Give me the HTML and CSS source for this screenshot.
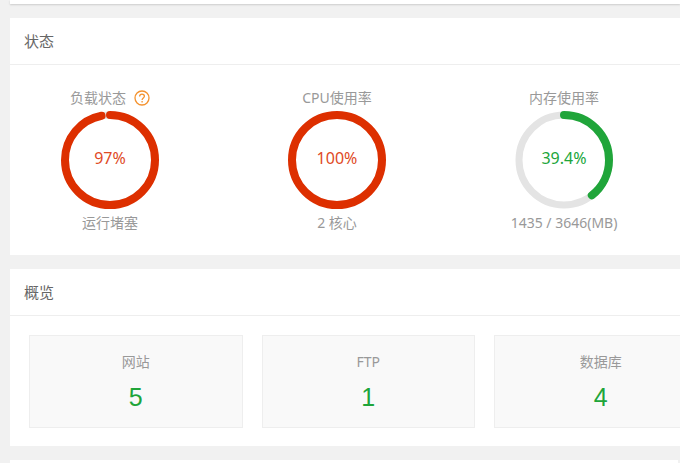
FILE: index.html
```html
<!DOCTYPE html>
<html lang="zh-CN">
<head>
  <meta charset="UTF-8" />
  <meta name="viewport" content="width=device-width, initial-scale=1.0"/>
  <title>状态</title>
  <link rel="stylesheet" href="styles.css">
</head>
<body>
  <main class="main">
    <div class="panel panel-top"></div>

    <section class="panel">
      <h2 class="panel-title">状态</h2>
      <div class="status-list">
        <div class="status-item danger">
          <h3 class="status-name">负载状态
            <a class="help" href="#" aria-label="?">
              <svg viewBox="0 0 16 16" width="16" height="16">
                <circle cx="8" cy="8" r="7"/>
                <path d="M5.6 6.5c0-1.5 1-2.4 2.4-2.4s2.4.9 2.4 2.2c0 1.6-2.3 1.8-2.3 3.7M8.1 11v1.4"/>
              </svg>
            </a>
          </h3>
          <div class="gauge">
            <svg viewBox="0 0 98 98">
              <circle class="track" cx="49" cy="49" r="45"/>
              <circle class="bar" cx="49" cy="49" r="45" pathLength="100" stroke-dasharray="97 100"/>
            </svg>
            <span class="percent">97%</span>
          </div>
          <p class="status-info">运行堵塞</p>
        </div>
        <div class="status-item danger">
          <h3 class="status-name">CPU使用率</h3>
          <div class="gauge">
            <svg viewBox="0 0 98 98">
              <circle class="track" cx="49" cy="49" r="45"/>
              <circle class="bar" cx="49" cy="49" r="45"/>
            </svg>
            <span class="percent">100%</span>
          </div>
          <p class="status-info">2 核心</p>
        </div>
        <div class="status-item normal">
          <h3 class="status-name">内存使用率</h3>
          <div class="gauge">
            <svg viewBox="0 0 98 98">
              <circle class="track" cx="49" cy="49" r="45"/>
              <circle class="bar" cx="49" cy="49" r="45" pathLength="100" stroke-dasharray="39.4 100"/>
            </svg>
            <span class="percent">39.4%</span>
          </div>
          <p class="status-info">1435 / 3646(MB)</p>
        </div>
      </div>
    </section>

    <section class="panel">
      <h2 class="panel-title">概览</h2>
      <div class="overview-list">
        <div class="overview-item">
          <p class="overview-name">网站</p>
          <a class="overview-count" href="#">5</a>
        </div>
        <div class="overview-item">
          <p class="overview-name">FTP</p>
          <a class="overview-count" href="#">1</a>
        </div>
        <div class="overview-item">
          <p class="overview-name">数据库</p>
          <a class="overview-count" href="#">4</a>
        </div>
      </div>
    </section>

    <div class="panel panel-next"></div>
  </main>
</body>
</html>
```

FILE: styles.css
```css
* {
  box-sizing: border-box;
}

body {
  margin: 0;
  background: #f1f1f1;
  color: #999;
  font-family: 'Noto Sans', 'Noto Sans CJK SC', sans-serif;
  font-size: 14px;
  line-height: 20px;
}

h2, h3, p {
  margin: 0;
  font-weight: normal;
}

.main {
  display: flex;
  flex-direction: column;
  gap: 14px;
  padding-left: 10px;
}

.panel {
  background: #fff;
  overflow: hidden;
}

.panel-top {
  height: 4px;
  box-shadow: 0 1px 2px #ccc;
}

.panel-next {
  height: 3px;
  margin-right: 2px;
}

.panel-title {
  padding: 13px 14px;
  border-bottom: 1px solid #eee;
  color: #666;
  font-size: 15px;
}

/* status */
.status-list {
  display: grid;
  grid-template-columns: repeat(3, 1fr);
  gap: 27px;
  padding: 23px 16px 22px 0;
}

.status-item {
  display: flex;
  flex-direction: column;
  align-items: center;
  gap: 3px;
}

.status-name {
  display: flex;
  align-items: center;
  gap: 8px;
  font-size: 14px;
}

.help {
  display: flex;
}

.help svg {
  fill: none;
  stroke: #f4922e;
  stroke-width: 1.3;
}

.gauge {
  display: grid;
  place-items: center;
  width: 98px;
  height: 98px;
  margin-bottom: 1px;
}

.gauge svg,
.percent {
  grid-area: 1 / 1;
}

.gauge svg {
  width: 100%;
  transform: rotate(-90deg);
}

.gauge circle {
  fill: none;
  stroke-width: 7;
}

.gauge .track {
  stroke: #e4e4e4;
}

.gauge .bar {
  stroke: currentColor;
  stroke-width: 8;
  stroke-linecap: round;
}

.danger .gauge {
  color: #dd2f00;
}

.danger .percent {
  color: #e04a25;
}

.normal .gauge {
  color: #20a53a;
}

.percent {
  padding-bottom: 4px;
  font-size: 16px;
}

/* overview */
.overview-list {
  display: grid;
  grid-auto-flow: column;
  grid-auto-columns: 32.8%;
  gap: 19px;
  padding: 19px 0 18px 19px;
}

.overview-item {
  display: flex;
  flex-direction: column;
  align-items: center;
  gap: 10px;
  padding: 16px 0 14px;
  border: 1px solid #eee;
  background: #f9f9f9;
}

.overview-count {
  color: #20a53a;
  font-family: 'Liberation Sans', sans-serif;
  font-size: 25px;
  line-height: 31px;
  text-decoration: none;
}
```
